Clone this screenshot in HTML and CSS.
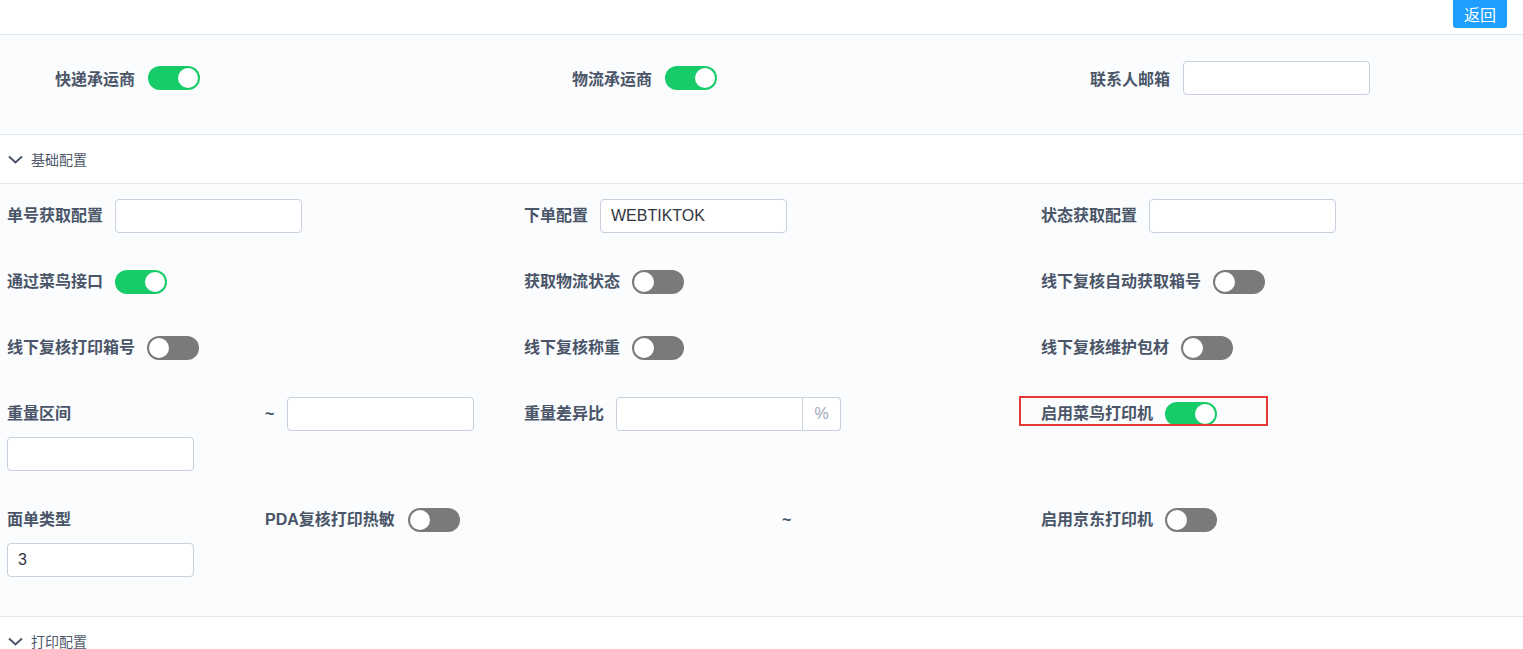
FILE: index.html
```html
<!DOCTYPE html>
<html>
<head>
  <meta charset="utf-8">
  <title>快递配置</title>
  <link rel="stylesheet" href="styles.css">
</head>
<body>

  <div class="topbar">
    <button class="btn-back">返回</button>
  </div>

  <div class="panel panel-top">
    <div class="top-grid">
      <div class="top-item"><span class="top-label">快递承运商</span><span class="switch on"><i></i></span></div>
      <div class="top-item"><span class="top-label">物流承运商</span><span class="switch on"><i></i></span></div>
      <div class="top-item"><span class="top-label">联系人邮箱</span><input class="field" type="text"></div>
    </div>
  </div>

  <div class="collapse-head">
    <svg class="chevron" width="15" height="9" viewBox="0 0 15 9"><polyline points="1,1.5 7.5,7.5 14,1.5" fill="none" stroke="#4a5568" stroke-width="2"/></svg>
    <span>基础配置</span>
  </div>

  <div class="panel panel-main">
    <div class="main-grid">
      <!-- 第一行 -->
      <div class="cell"><span class="lbl">单号获取配置</span><input class="field" type="text"></div>
      <div class="cell"><span class="lbl">下单配置</span><input class="field" type="text" value="WEBTIKTOK"></div>
      <div class="cell"><span class="lbl">状态获取配置</span><input class="field" type="text"></div>

      <!-- 第二行 -->
      <div class="cell"><span class="lbl">通过菜鸟接口</span><span class="switch on"><i></i></span></div>
      <div class="cell"><span class="lbl">获取物流状态</span><span class="switch"><i></i></span></div>
      <div class="cell"><span class="lbl">线下复核自动获取箱号</span><span class="switch"><i></i></span></div>

      <!-- 第三行 -->
      <div class="cell"><span class="lbl">线下复核打印箱号</span><span class="switch"><i></i></span></div>
      <div class="cell"><span class="lbl">线下复核称重</span><span class="switch"><i></i></span></div>
      <div class="cell"><span class="lbl">线下复核维护包材</span><span class="switch"><i></i></span></div>

      <!-- 第四行 -->
      <div class="cell split">
        <div class="half"><span class="lbl">重量区间</span><input class="field" type="text"></div>
        <div class="half"><span class="lbl">~</span><input class="field" type="text"></div>
      </div>
      <div class="cell">
        <span class="lbl">重量差异比</span>
        <div class="input-group"><input class="field" type="text"><span class="addon">%</span></div>
      </div>
      <div class="cell marked"><span class="lbl">启用菜鸟打印机</span><span class="switch on"><i></i></span></div>

      <!-- 第五行 -->
      <div class="cell split">
        <div class="half"><span class="lbl">面单类型</span><input class="field" type="text" value="3"></div>
        <div class="half"><span class="lbl">PDA复核打印热敏</span><span class="switch"><i></i></span></div>
      </div>
      <div class="cell split">
        <div class="half"></div>
        <div class="half"><span class="lbl">~</span></div>
      </div>
      <div class="cell"><span class="lbl">启用京东打印机</span><span class="switch"><i></i></span></div>
    </div>
  </div>

  <div class="collapse-head">
    <svg class="chevron" width="15" height="9" viewBox="0 0 15 9"><polyline points="1,1.5 7.5,7.5 14,1.5" fill="none" stroke="#4a5568" stroke-width="2"/></svg>
    <span>打印配置</span>
  </div>

</body>
</html>
```

FILE: styles.css
```css
body {
  margin: 0;
  font-family: "Liberation Sans", "Noto Sans CJK SC", sans-serif;
  background-color: #fafcfe;
  color: #4a5568;
}

.topbar {
  height: 34px;
  background-color: #ffffff;
  border-bottom: 1px solid #dde4ec;
  display: flex;
  justify-content: flex-end;
  align-items: flex-start;
  padding-right: 16px;
}

.btn-back {
  width: 54px;
  height: 28px;
  padding: 0;
  border: none;
  border-radius: 0 0 3px 3px;
  background-color: #1e9fff;
  color: #ffffff;
  font-family: inherit;
  font-size: 16px;
}

.panel-top {
  padding: 26px 0 39px 0;
}

.top-grid {
  display: grid;
  grid-template-columns: 517px 518px 1fr;
}

.top-item {
  display: flex;
  align-items: center;
  height: 34px;
}

.top-label {
  width: 135px;
  margin-right: 13px;
  text-align: right;
  font-size: 16px;
  font-weight: bold;
  white-space: nowrap;
}

.collapse-head {
  height: 48px;
  background-color: #ffffff;
  border-top: 1px solid #e1e7ee;
  border-bottom: 1px solid #e1e7ee;
  display: flex;
  align-items: center;
  padding-left: 8px;
  font-size: 14px;
  color: #4f5a6c;
}

.chevron {
  margin-right: 8px;
  margin-top: 1px;
}

.panel-main {
  padding: 15px 0 39px 7px;
}

.main-grid {
  display: grid;
  grid-template-columns: 517px 517px 1fr;
  row-gap: 32px;
  align-items: start;
}

.cell {
  display: flex;
  align-items: center;
  gap: 12px;
  min-height: 34px;
}

.cell.split {
  display: grid;
  grid-template-columns: 258px 1fr;
  align-items: start;
  gap: 0;
}

.half {
  display: flex;
  flex-wrap: wrap;
  align-items: center;
  column-gap: 13px;
  row-gap: 6px;
  min-height: 34px;
}

.lbl {
  font-size: 16px;
  font-weight: bold;
  line-height: 34px;
  white-space: nowrap;
}

.field {
  box-sizing: border-box;
  width: 187px;
  height: 34px;
  padding: 0 10px;
  border: 1px solid #c7d0dc;
  border-radius: 4px;
  background-color: #ffffff;
  font-family: "Liberation Sans", sans-serif;
  font-size: 16px;
  color: #303540;
}

.input-group {
  display: flex;
}

.input-group .field {
  border-radius: 4px 0 0 4px;
}

.addon {
  box-sizing: border-box;
  width: 38px;
  height: 34px;
  border: 1px solid #c7d0dc;
  border-left: none;
  border-radius: 0 4px 4px 0;
  background-color: #ffffff;
  color: #9ba8ba;
  font-size: 16px;
  display: flex;
  align-items: center;
  justify-content: center;
}

.switch {
  box-sizing: border-box;
  width: 52px;
  height: 24px;
  padding: 2px;
  border-radius: 12px;
  background-color: #7a7a7a;
  display: flex;
  align-items: center;
  flex-shrink: 0;
}

.switch i {
  width: 20px;
  height: 20px;
  border-radius: 50%;
  background-color: #ffffff;
}

.switch.on {
  background-color: #17cc68;
  justify-content: flex-end;
}

/* 红框标注 */
.marked {
  position: relative;
}

.marked::before {
  content: "";
  position: absolute;
  left: -22px;
  top: -1px;
  width: 249px;
  height: 30px;
  box-sizing: border-box;
  border: 2px solid #e53935;
}
```
